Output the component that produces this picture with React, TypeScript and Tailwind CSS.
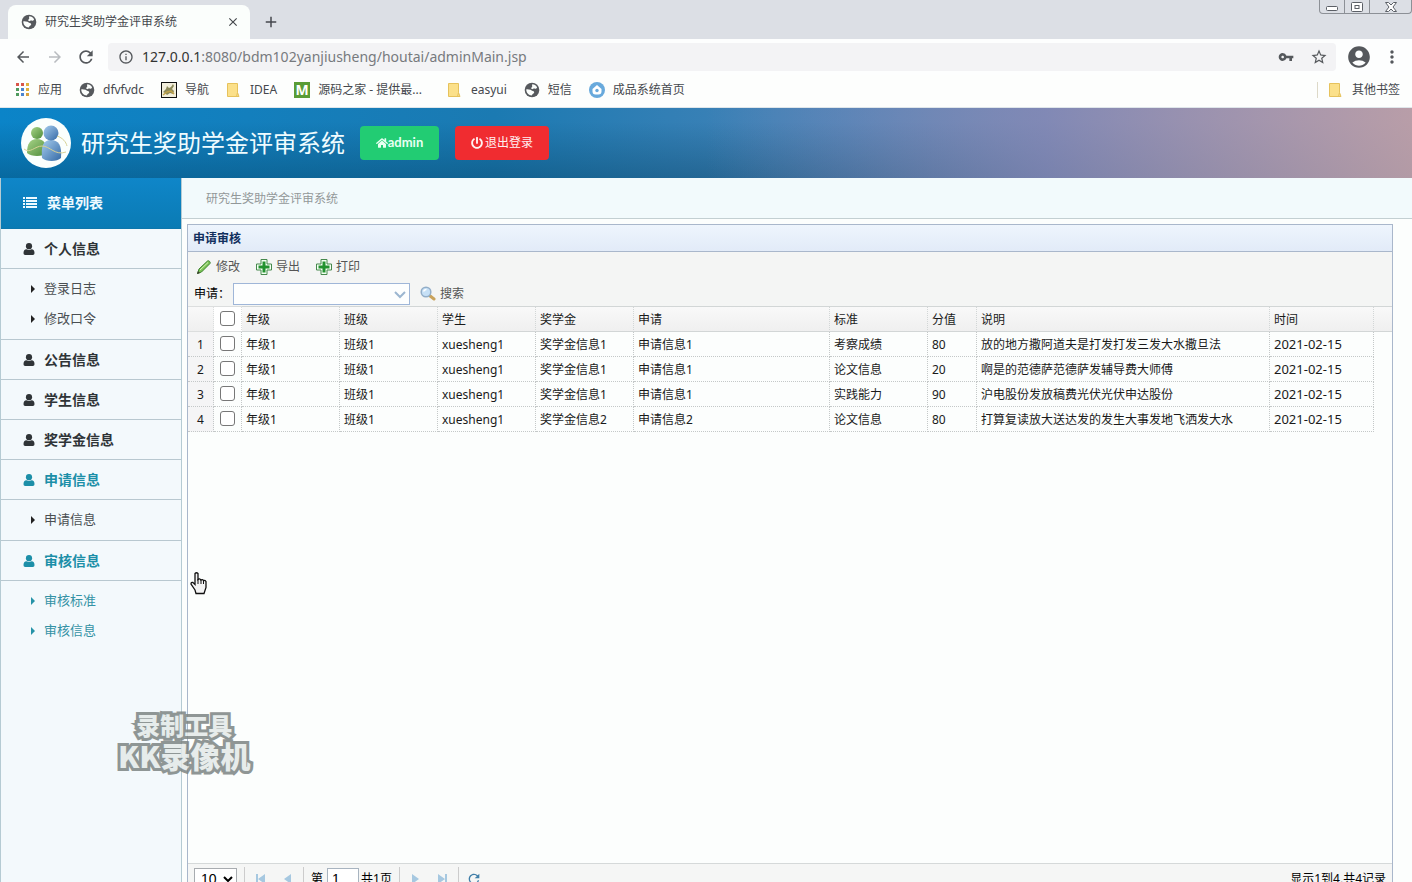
import type { ReactNode } from "react";
import { FaHome, FaPowerOff } from "react-icons/fa";
import {
  MdAccountCircle,
  MdAdd,
  MdArrowBack,
  MdArrowForward,
  MdClose,
  MdInfoOutline,
  MdMoreVert,
  MdRefresh,
  MdStarBorder,
  MdVpnKey,
} from "react-icons/md";

const rows = [
  { grade: "年级1", klass: "班级1", student: "xuesheng1", award: "奖学金信息1", apply: "申请信息1", standard: "考察成绩", score: 80, note: "放的地方撒阿道夫是打发打发三发大水撒旦法", date: "2021-02-15" },
  { grade: "年级1", klass: "班级1", student: "xuesheng1", award: "奖学金信息1", apply: "申请信息1", standard: "论文信息", score: 20, note: "啊是的范德萨范德萨发辅导费大师傅", date: "2021-02-15" },
  { grade: "年级1", klass: "班级1", student: "xuesheng1", award: "奖学金信息1", apply: "申请信息1", standard: "实践能力", score: 90, note: "沪电股份发放稿费光伏光伏申达股份", date: "2021-02-15" },
  { grade: "年级1", klass: "班级1", student: "xuesheng1", award: "奖学金信息2", apply: "申请信息2", standard: "论文信息", score: 80, note: "打算复读放大送达发的发生大事发地飞洒发大水", date: "2021-02-15" },
];

const columns = [
  { title: "年级", width: "w-[98px]" },
  { title: "班级", width: "w-[98px]" },
  { title: "学生", width: "w-[98px]" },
  { title: "奖学金", width: "w-[98px]" },
  { title: "申请", width: "w-[196px]" },
  { title: "标准", width: "w-[98px]" },
  { title: "分值", width: "w-[49px]" },
  { title: "说明", width: "w-[293px]" },
  { title: "时间", width: "w-[104px]" },
];

const menu = [
  { title: "个人信息", active: false, items: ["登录日志", "修改口令"], itemsActive: false },
  { title: "公告信息", active: false, items: [], itemsActive: false },
  { title: "学生信息", active: false, items: [], itemsActive: false },
  { title: "奖学金信息", active: false, items: [], itemsActive: false },
  { title: "申请信息", active: true, items: ["申请信息"], itemsActive: false },
  { title: "审核信息", active: true, items: ["审核标准", "审核信息"], itemsActive: true },
];

function AppsIcon() {
  const colors = ["#d9564a", "#d9564a", "#e0b13c", "#4f9a5e", "#4b84d0", "#e0b13c", "#4f9a5e", "#4b84d0", "#d9a03c"];
  return (
    <svg viewBox="0 0 14 14" className="size-3.5" aria-hidden="true">
      {colors.map((fill, i) => (
        <rect key={i} x={(i % 3) * 5} y={Math.floor(i / 3) * 5} width="3" height="3" fill={fill} />
      ))}
    </svg>
  );
}

function GlobeIcon() {
  return (
    <svg viewBox="0 0 16 16" className="size-4" aria-hidden="true">
      <circle cx="8" cy="8" r="7.300" fill="#56595d" />
      <path
        d="M2.200 7.500c1.500-.8 2.600.2 4.200.2 1 .2 1.400 1.100 2.400 1.200 1.200.1 1.700 1 1.200 2-.7 1-1.800 1-2.300 2.600-2.800-.2-5.300-2.500-5.500-6zM8.300 2.300c1.900 0 3.800 1 4.800 2.900-.4 1.300-1.500 1.600-2.700 1.400-1.100-.1-1.500.9-2.600.5-1-.5-.6-1.600.2-2 .8-.6-.5-1.700.3-2.800z"
        fill="#fbfefc"
      />
    </svg>
  );
}

function FolderIcon() {
  return (
    <svg viewBox="0 0 16 16" className="size-4" aria-hidden="true">
      <path d="M1.500 1.500h10v9l1.500 4h-11.500z" fill="#fbe08a" stroke="#e6c25c" />
      <path d="M11.500 10.500l-1 4" stroke="#e6c25c" fill="none" />
    </svg>
  );
}

function NavSiteIcon() {
  return (
    <svg viewBox="0 0 16 16" className="size-4" aria-hidden="true">
      <rect x=".5" y=".5" width="15" height="15" fill="#f3efdc" stroke="#111" />
      <path d="M2 10l3-3 1-3 2 2 2-1 2-3 1 2-2 3 2 2-1 3-3-1-3 2-2-2z" fill="#8d8a5a" />
      <path d="M2 13l4-3 4-1 3 3" stroke="#c0a24a" strokeWidth="1.500" fill="none" />
    </svg>
  );
}

function SourceIcon() {
  return (
    <span className="flex size-4 items-center justify-center bg-[#5a9c36] text-sm font-bold leading-none text-white" aria-hidden="true">
      M
    </span>
  );
}

function HomeSiteIcon() {
  return (
    <svg viewBox="0 0 16 16" className="size-4" aria-hidden="true">
      <circle cx="8" cy="8" r="8" fill="#68a9dc" />
      <path d="M8 3l4.500 4v2.500a3 3 0 0 1-3 3h-3a3 3 0 0 1-3-3V7z" fill="#fff" />
      <circle cx="8" cy="8.500" r="1.700" fill="#68a9dc" />
    </svg>
  );
}

function LogoIcon() {
  return (
    <svg viewBox="0 0 50 50" className="size-[50px] shrink-0" aria-hidden="true">
      <defs>
        <linearGradient id="green" x1="0" y1="0" x2="1" y2="1">
          <stop offset="0" stopColor="#a8d488" />
          <stop offset="1" stopColor="#4f8c3a" />
        </linearGradient>
        <linearGradient id="blue" x1="0" y1="0" x2="1" y2="1">
          <stop offset="0" stopColor="#a6cdee" />
          <stop offset="1" stopColor="#356aa6" />
        </linearGradient>
      </defs>
      <circle cx="25" cy="25" r="25" fill="#fbfffd" />
      <path d="M6 35c0-9 3-14 10-14s10 5 10 14c-4 4-16 4-20 0z" fill="url(#green)" />
      <circle cx="16" cy="15" r="6" fill="url(#green)" />
      <path d="M21 40c-1-12 1-18 9-18s11 6 10 18c-4 4-15 4-19 0z" fill="url(#blue)" />
      <circle cx="30" cy="15" r="7.500" fill="url(#blue)" />
      <path d="M3 31c6 5 11-3 18-3 8 0 13 10 24 6M36 18c6 2 9 6 10 10" stroke="#d8d296" fill="none" />
    </svg>
  );
}

function ListIcon() {
  return (
    <svg viewBox="0 0 14 12" className="h-3 w-3.5" fill="currentColor" aria-hidden="true">
      {[0, 3, 6, 9].map((y) => (
        <g key={y}>
          <rect x="0" y={y} width="2" height="2" />
          <rect x="3" y={y} width="11" height="2" />
        </g>
      ))}
    </svg>
  );
}

function UserIcon() {
  return (
    <svg viewBox="0 0 14 14" className="size-3.5" fill="currentColor" aria-hidden="true">
      <circle cx="7" cy="4.200" r="3.100" />
      <path d="M1.500 11c0-2.500 1-3.800 3-3.800 1.500 1 3.500 1 5 0 2 0 3 1.300 3 3.800 0 1.200-.6 1.900-1.700 1.900H3.200c-1.100 0-1.700-.7-1.700-1.900z" />
    </svg>
  );
}

function PencilIcon() {
  return (
    <svg viewBox="0 0 16 16" className="size-4" aria-hidden="true">
      <path d="M1.500 14.500l1.500-4.500 8.500-8c1-1 3.500 1 2.500 2.500l-8.500 8.500z" fill="#7cc456" stroke="#3f8432" />
      <path d="M4 11l8-7.500" stroke="#d3f0b8" />
      <path d="M1 15l1-3 2 2z" fill="#3b3b2a" />
    </svg>
  );
}

function PlusIcon() {
  return (
    <svg viewBox="0 0 16 16" className="size-4" aria-hidden="true">
      <path d="M5 .5h6V5h4.500v6H11v4.500H5V11H.5V5H5z" fill="#f4fff2" stroke="#46894c" strokeLinejoin="round" />
      <path d="M6.500 2.500h3v4h4v3h-4v4h-3v-4h-4v-3h4z" fill="#23922f" />
    </svg>
  );
}

function SearchIcon() {
  return (
    <svg viewBox="0 0 16 16" className="size-4" aria-hidden="true">
      <path d="M9.500 9.500l4.500 3.500" stroke="#c9a35c" strokeWidth="3" strokeLinecap="round" />
      <circle cx="6" cy="6" r="4.800" fill="#c6e0f6" stroke="#93aec8" strokeWidth="1.500" />
      <path d="M3.500 5.500a3 3 0 0 1 3-2" stroke="#fff" strokeWidth="1.500" fill="none" />
    </svg>
  );
}

function PagerIcon({ d }: { d: string }) {
  return (
    <svg viewBox="0 0 16 16" className="size-4" fill="#a6c8e0" aria-hidden="true">
      <path d={d} />
    </svg>
  );
}

function HandCursor() {
  return (
    <svg viewBox="0 0 17 23" className="pointer-events-none absolute left-[190px] top-[572px] h-[23px] w-[17px]" aria-hidden="true">
      <path
        d="M5 1.500q1.500-1.500 3 0v6q1.500-1.500 3 .5 1.500-1 2.500 .5 1.500-.5 2.500 1v6l-2 6H6l-1-3.500-4-6q0-2 2-1.500l2 2z"
        fill="#f4f4f4"
        stroke="#111"
        strokeWidth="1.300"
      />
      <path d="M8 7v5M11 8v4M13.500 9v3" stroke="#111" />
    </svg>
  );
}

function Bookmark({ icon, label }: { icon: ReactNode; label: string }) {
  return (
    <a href="#" className="flex items-center gap-2 whitespace-nowrap">
      {icon}
      {label}
    </a>
  );
}

function BrowserChrome() {
  return (
    <div className="shrink-0 text-xs text-[#45484d]">
      <div className="flex h-[39px] bg-[#dcdfe5] pl-2">
        <div className="mt-[5px] flex w-[242px] items-center rounded-t-lg bg-[#fbfefc] pl-[13px] pr-2.5">
          <GlobeIcon />
          <span className="ml-2 flex-1">研究生奖助学金评审系统</span>
          <button aria-label="关闭标签页">
            <MdClose className="size-3.5" />
          </button>
        </div>
        <button aria-label="新标签页" className="ml-3 mt-1">
          <MdAdd className="size-[18px]" />
        </button>
        <div className="ml-auto flex h-3.5 divide-x divide-[#8c9096] rounded-b border border-t-0 border-[#8c9096] text-[#5b5f66]">
          <button aria-label="最小化" className="flex w-[25px] items-center justify-center">
            <svg viewBox="0 0 12 8" className="h-2 w-3" fill="#fff" stroke="currentColor">
              <rect x=".5" y="3.500" width="11" height="4" rx="1" />
            </svg>
          </button>
          <button aria-label="还原" className="flex w-[25px] items-center justify-center">
            <svg viewBox="0 0 12 10" className="h-2.5 w-3" fill="#fff" stroke="currentColor">
              <rect x=".5" y=".5" width="11" height="9" rx="1" />
              <rect x="4" y="3.500" width="4" height="3" />
            </svg>
          </button>
          <button aria-label="关闭" className="flex w-[41px] items-center justify-center">
            <svg viewBox="0 0 12 10" className="h-2.5 w-3" fill="#fff" stroke="currentColor">
              <path d="M.5.5h3L6 3 8.500.5h3L8 5l3.500 4.500h-3L6 7 3.500 9.500h-3L4 5z" />
            </svg>
          </button>
        </div>
      </div>

      <div className="flex h-9 items-center bg-[#fdfefe] px-3.5 text-[#55585c]">
        <button aria-label="后退">
          <MdArrowBack className="size-[18px]" />
        </button>
        <button aria-label="前进" className="ml-3.5 text-[#b9bcc0]">
          <MdArrowForward className="size-[18px]" />
        </button>
        <button aria-label="刷新" className="ml-3">
          <MdRefresh className="size-5" />
        </button>
        <div className="ml-3 flex h-7 flex-1 items-center gap-2 rounded-sm bg-[#f3f3f5] pl-2.5 pr-2">
          <MdInfoOutline className="size-4" />
          <div className="flex-1 text-sm text-[#777a7e]">
            <span className="text-[#333]">127.0.0.1</span>:8080/bdm102yanjiusheng/houtai/adminMain.jsp
          </div>
          <MdVpnKey className="size-4" />
          <MdStarBorder className="ml-2 size-[18px]" />
        </div>
        <MdAccountCircle className="ml-2.5 size-[26px]" />
        <button aria-label="菜单" className="-mr-1 ml-2.5">
          <MdMoreVert className="size-5" />
        </button>
      </div>

      <div className="flex h-[33px] items-center gap-[17px] border-b border-[#dfe6ea] bg-[#fdfefd] pb-0.5 pl-4 pr-3">
        <Bookmark icon={<AppsIcon />} label="应用" />
        <Bookmark icon={<GlobeIcon />} label="dfvfvdc" />
        <Bookmark icon={<NavSiteIcon />} label="导航" />
        <Bookmark icon={<FolderIcon />} label="IDEA" />
        <Bookmark icon={<SourceIcon />} label="源码之家 - 提供最..." />
        <span className="ml-2">
          <Bookmark icon={<FolderIcon />} label="easyui" />
        </span>
        <Bookmark icon={<GlobeIcon />} label="短信" />
        <Bookmark icon={<HomeSiteIcon />} label="成品系统首页" />
        <div className="ml-auto border-l border-[#ddd9c8] pl-2.5">
          <Bookmark icon={<FolderIcon />} label="其他书签" />
        </div>
      </div>
    </div>
  );
}

function AppHeader() {
  return (
    <header className="flex h-[70px] shrink-0 items-center bg-[linear-gradient(90deg,transparent_50%,rgba(136,136,182,0.75)_74%,rgba(186,158,168,0.9)_100%),linear-gradient(180deg,transparent_20%,rgba(0,55,85,0.35)),linear-gradient(90deg,#0b84c8,#1b7ab2_35%,#4a84b8_60%,#a898a8)] pl-[21px]">
      <LogoIcon />
      <h1 className="ml-2.5 text-2xl leading-8 text-[#effcff]">研究生奖助学金评审系统</h1>
      <button className="ml-[15px] flex h-[34px] w-[79px] items-center justify-center rounded-sm bg-[#22cc73] font-['Lato'] text-[13px] font-bold text-[#e8fff2]">
        <FaHome className="size-3" />
        admin
      </button>
      <button className="ml-4 flex h-[34px] w-[94px] items-center justify-center gap-0.5 rounded-sm bg-[#f02c30] text-xs text-[#fff0f0]">
        <FaPowerOff className="size-3" />
        退出登录
      </button>
    </header>
  );
}

function Sidebar() {
  return (
    <nav className="w-[182px] shrink-0 border-x border-[#b5cbd3] bg-[#f3f9fc]">
      <div className="flex h-[51px] items-center gap-2.5 border-b border-[#0d77ad] bg-linear-to-b from-[#0f86c9] to-[#0a7bb4] pl-[22px] text-sm font-bold text-[#eefaff]">
        <ListIcon />
        菜单列表
      </div>
      {menu.map((group) => (
        <div key={group.title}>
          <a
            href="#"
            className={`flex h-10 items-center gap-2 border-b border-[#b8c8d0] pl-[21px] text-sm font-bold ${group.active ? "text-[#1c8fa8]" : "text-[#2f3437]"}`}
          >
            <UserIcon />
            {group.title}
          </a>
          {group.items.length > 0 && (
            <ul className={`py-[5px] text-[13px] ${group.itemsActive ? "text-[#3492a5]" : "border-b border-[#b8c8d0] text-[#4a4f52]"}`}>
              {group.items.map((item) => (
                <li key={item}>
                  <a href="#" className="flex h-[30px] items-center gap-2 pl-[30px]">
                    <svg viewBox="0 0 5 8" className="h-2 w-[5px]" aria-hidden="true">
                      <path d="M0 0l4 4-4 4z" fill={group.itemsActive ? "#2593a8" : "#222"} />
                    </svg>
                    {item}
                  </a>
                </li>
              ))}
            </ul>
          )}
        </div>
      ))}
    </nav>
  );
}

function CheckBox({ label }: { label: string }) {
  return (
    <input
      type="checkbox"
      aria-label={label}
      className="mx-auto block size-[15px] appearance-none rounded-[3px] border border-[#777] bg-white checked:bg-[#1c8fa8]"
    />
  );
}

function Toolbar() {
  return (
    <div className="h-[54px] bg-[#f4f5f4] pl-1.5 text-xs">
      <div className="flex h-[29px] items-center gap-4 pl-0.5 text-[#555]">
        <button className="flex items-center gap-1">
          <PencilIcon />
          修改
        </button>
        <button className="flex items-center gap-1">
          <PlusIcon />
          导出
        </button>
        <button className="flex items-center gap-1">
          <PlusIcon />
          打印
        </button>
      </div>
      <div className="flex h-[25px] items-center">
        <label htmlFor="apply" className="w-[39px] whitespace-nowrap text-black">
          申请：
        </label>
        <div className="relative h-[22px] w-[177px]">
          <select id="apply" className="h-full w-full appearance-none border border-[#9fb6d8] bg-[#fdfefe]" />
          <svg viewBox="0 0 12 8" className="pointer-events-none absolute right-1 top-2 h-2 w-3" aria-hidden="true">
            <path d="M1 1l5 5 5-5" stroke="#9cb6d0" strokeWidth="2" fill="none" />
          </svg>
        </div>
        <button className="ml-2.5 flex items-center gap-1 text-[#555]">
          <SearchIcon />
          搜索
        </button>
      </div>
    </div>
  );
}

function DataGrid() {
  const border = "border-b border-r border-dotted border-[#c4c8c8]";
  const cell = `truncate px-1 pt-0.5 ${border}`;

  return (
    <table className="w-full table-fixed border-separate border-spacing-0 text-left text-xs text-[#1a1a1a]">
      <colgroup>
        <col className="w-[26px]" />
        <col className="w-[28px]" />
        {columns.map((column) => (
          <col key={column.title} className={column.width} />
        ))}
        <col />
      </colgroup>
      <thead>
        <tr className="h-[26px] bg-linear-to-b from-[#f9f9f9] to-[#efefef]">
          <th className="border-y border-r border-[#dcdede] [border-right-style:dotted]" aria-label="序号" />
          <th className="border-y border-r border-[#dcdede] bg-white pb-0.5 [border-right-style:dotted]">
            <CheckBox label="全选" />
          </th>
          {columns.map((column) => (
            <th key={column.title} className="border-y border-r border-[#d2d6d6] px-1 pt-0.5 font-normal [border-right-style:dotted]">
              {column.title}
            </th>
          ))}
          <th className="border-y border-[#d2d6d6]" aria-hidden="true" />
        </tr>
      </thead>
      <tbody>
        {rows.map((row, i) => (
          <tr key={i} className="h-[25px]">
            <td className={`${cell} bg-[#f5f5f6] text-center`}>{i + 1}</td>
            <td className={`pb-0.5 ${border}`}>
              <CheckBox label={`选择第${i + 1}行`} />
            </td>
            <td className={cell}>{row.grade}</td>
            <td className={cell}>{row.klass}</td>
            <td className={cell}>{row.student}</td>
            <td className={cell}>{row.award}</td>
            <td className={cell}>{row.apply}</td>
            <td className={cell}>{row.standard}</td>
            <td className={cell}>{row.score}</td>
            <td className={cell}>{row.note}</td>
            <td className={`px-1 text-[13px] leading-4 ${border}`}>{row.date}</td>
            <td />
          </tr>
        ))}
      </tbody>
    </table>
  );
}

function Pager() {
  const divider = "mx-[7px] h-6 w-px bg-[#ccc]";

  return (
    <div className="flex h-[31px] shrink-0 items-center border-t border-[#d5d9d9] bg-[#f5f6f5] px-1.5 text-xs text-black">
      <select aria-label="每页条数" className="h-[22px] w-[43px] border border-[#a8acb0] bg-white pl-0.5 font-['Liberation_Sans'] text-sm leading-4">
        <option>10</option>
      </select>
      <span className={divider} />
      <button aria-label="首页">
        <PagerIcon d="M4 3h2v10H4zM13 3v10L6 8z" />
      </button>
      <button aria-label="上一页" className="ml-3">
        <PagerIcon d="M11 3v10L4 8z" />
      </button>
      <span className={divider} />
      <label htmlFor="page">第</label>
      <input id="page" defaultValue="1" className="ml-1 h-[22px] w-8 border border-[#a8b4c0] bg-white px-1 font-['Liberation_Sans'] text-sm" />
      <span className="ml-0.5">共1页</span>
      <span className={divider} />
      <button aria-label="下一页">
        <PagerIcon d="M5 3v10l7-5z" />
      </button>
      <button aria-label="末页" className="ml-3">
        <PagerIcon d="M3 3v10l7-5zM10 3h2v10h-2z" />
      </button>
      <span className={divider} />
      <button aria-label="重新加载">
        <MdRefresh className="size-4 text-[#3f7ea8]" />
      </button>
      <span className="ml-auto">显示1到4,共4记录</span>
    </div>
  );
}

function Watermark() {
  return (
    <div className="pointer-events-none absolute left-[118px] top-[711px] text-center font-['Noto_Sans_CJK_SC'] font-black text-[#e4eae9] opacity-85 [-webkit-text-stroke:6px_#7d8584] [paint-order:stroke]">
      <div className="text-2xl leading-7">录制工具</div>
      <div className="text-[30px] leading-8">KK录像机</div>
    </div>
  );
}

export default function App() {
  return (
    <div className="relative flex h-screen flex-col overflow-hidden bg-[#fcfefd] font-['Noto_Sans','Noto_Sans_CJK_SC',sans-serif]">
      <BrowserChrome />
      <AppHeader />
      <div className="flex min-h-0 flex-1">
        <Sidebar />
        <main className="flex min-w-0 flex-1 flex-col">
          <div className="flex h-[41px] shrink-0 items-center border-b border-[#c3cfd2] bg-[#f2fafc] pl-6 pt-0.5 text-xs text-[#929899]">
            研究生奖助学金评审系统
          </div>
          {/* the pager runs past the lower edge of the window */}
          <section className="-mb-[13px] ml-[5px] mr-[19px] mt-[5px] flex min-h-0 flex-1 flex-col border border-[#a9b7cb]">
            <h2 className="flex h-[27px] shrink-0 items-center border-b border-[#a9b7cb] bg-linear-to-b from-[#eef5fd] to-[#e2ebf8] pl-[5px] pt-0.5 text-xs font-bold text-[#12305e]">
              申请审核
            </h2>
            <Toolbar />
            <div className="min-h-0 flex-1">
              <DataGrid />
            </div>
            <Pager />
          </section>
        </main>
      </div>
      <HandCursor />
      <Watermark />
    </div>
  );
}
